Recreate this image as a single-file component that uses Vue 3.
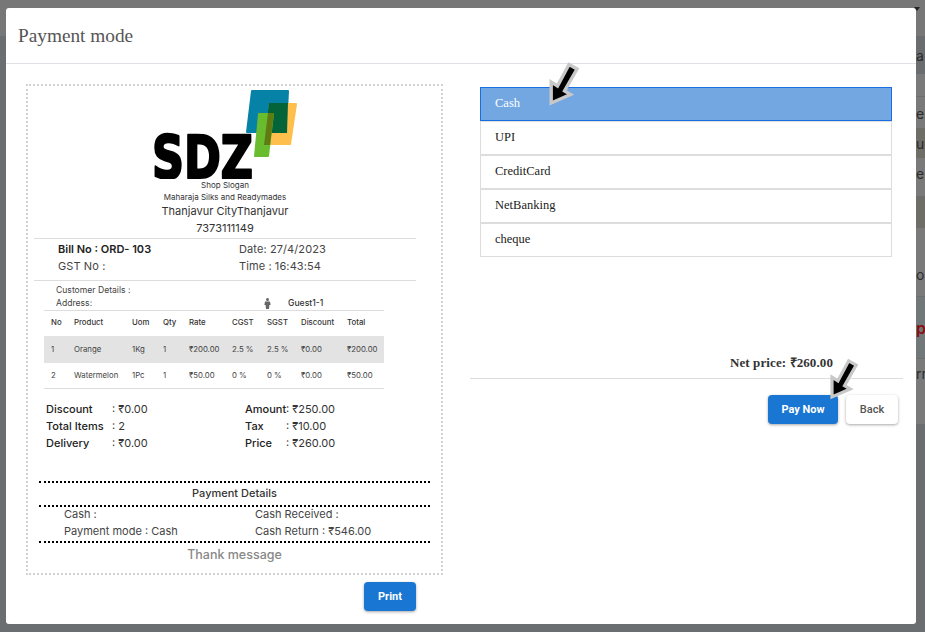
<template>
  <div class="page">
    <div class="backdrop">
      <div class="bg-top"></div>
      <div class="bg-rows">
        <div
          v-for="(r, i) in bgRows"
          :key="i"
          class="bg-row"
          :class="r.cls"
          :style="{ height: r.h + 'px' }"
        >
          <span v-if="r.text">{{ r.text }}</span>
        </div>
      </div>
      <i class="bg-caret"></i>
    </div>

    <div class="modal">
      <header class="modal-head">Payment mode</header>
      <div class="modal-body">
        <section class="left">
          <div class="receipt">
            <div class="logo">
              <svg width="150" height="91" viewBox="0 0 150 91">
                <path d="M102 3h36l-2 41H97z" fill="#0682a6" stroke="#0682a6" stroke-width="2" stroke-linejoin="round" />
                <path d="M120 16h26l-6 40h-25z" fill="#ffbf4d" stroke="#ffbf4d" stroke-width="2" stroke-linejoin="round" />
                <path d="M119 15h19l-1 30h-22z" fill="#03643a" />
                <path d="M109 26h14l-5 42h-13z" fill="#6abc2f" stroke="#6abc2f" stroke-width="2" stroke-linejoin="round" />
                <path d="M118 25h6l-4 32h-6z" fill="#5f7b12" />
                <text class="logo-text" x="2" y="90" textLength="101" lengthAdjust="spacingAndGlyphs">SDZ</text>
              </svg>
            </div>
            <div class="center tiny">Shop Slogan</div>
            <div class="center tiny">Maharaja Silks and Readymades</div>
            <div class="center addr">Thanjavur CityThanjavur</div>
            <div class="center addr last">7373111149</div>
            <hr class="rule" />
            <div class="bill">
              <div><b>Bill No : ORD- 103</b></div>
              <div>Date: 27/4/2023</div>
              <div>GST No :</div>
              <div>Time : 16:43:54</div>
            </div>
            <hr class="rule" />
            <div class="customer">
              <div>Customer Details :</div>
              <div class="cust-row">
                <span>Address:</span>
                <span class="guest">
                  <svg width="7" height="11" viewBox="0 0 7 11"><circle cx="3.5" cy="1.6" r="1.5" fill="#666" /><path d="M1 3.4h5l.6 3.6H5.4L5 11H2l-.4-4H.4z" fill="#666" /></svg>
                  <b>Guest1-1</b>
                </span>
              </div>
            </div>
            <table class="items">
              <colgroup>
                <col v-for="(w, i) in colWidths" :key="i" :width="w" />
              </colgroup>
              <thead>
                <tr><th v-for="h in heads" :key="h">{{ h }}</th></tr>
              </thead>
              <tbody>
                <tr v-for="row in rows" :key="row[0]">
                  <td v-for="(c, i) in row" :key="i">{{ c }}</td>
                </tr>
              </tbody>
            </table>
            <div class="totals">
              <div class="tot"><b>Discount</b><span>: ₹0.00</span></div>
              <div class="tot r"><b>Amount</b><span>: ₹250.00</span></div>
              <div class="tot"><b>Total Items</b><span>: 2</span></div>
              <div class="tot r"><b>Tax</b><span>: ₹10.00</span></div>
              <div class="tot"><b>Delivery</b><span>: ₹0.00</span></div>
              <div class="tot r"><b>Price</b><span>: ₹260.00</span></div>
            </div>
            <div class="pay-title">Payment Details</div>
            <div class="pay-info">
              <div>Cash :</div>
              <div>Cash Received :</div>
              <div>Payment mode : Cash</div>
              <div>Cash Return : ₹546.00</div>
            </div>
            <div class="thanks">Thank message</div>
          </div>
          <div class="print-row">
            <button class="btn primary print">Print</button>
          </div>
        </section>

        <section class="right">
          <ul class="modes">
            <li v-for="m in modes" :key="m" :class="{ active: m === selected }">{{ m }}</li>
            <svg class="arrow a1" width="32" height="47" viewBox="0 0 32 47"><path :d="arrowPath" fill="#000" stroke="#c8c8c8" stroke-width="3.4" /></svg>
          </ul>
          <div class="net">Net price: ₹260.00</div>
          <hr class="net-rule" />
          <div class="actions">
            <button class="btn primary pay">Pay Now</button>
            <button class="btn back">Back</button>
            <svg class="arrow a2" width="30" height="45" viewBox="0 0 32 47"><path :d="arrowPath" fill="#000" stroke="#c8c8c8" stroke-width="3.4" /></svg>
          </div>
        </section>
      </div>
    </div>
  </div>
</template>

<script setup>
import { ref } from 'vue'

const heads = ['No', 'Product', 'Uom', 'Qty', 'Rate', 'CGST', 'SGST', 'Discount', 'Total']
const colWidths = [23, 58, 31, 26, 43, 35, 34, 46, 44]
const rows = [
  ['1', 'Orange', '1Kg', '1', '₹200.00', '2.5 %', '2.5 %', '₹0.00', '₹200.00'],
  ['2', 'Watermelon', '1Pc', '1', '₹50.00', '0 %', '0 %', '₹0.00', '₹50.00']
]
const modes = ['Cash', 'UPI', 'CreditCard', 'NetBanking', 'cheque']
const selected = ref('Cash')
const arrowPath = 'M3.2 41 L3.2 20 L9.5 24 L21 2.5 L29 7 L16.5 29 L22.5 32.5 Z'

// what shows of the page behind the dialog, top to bottom
const bgRows = [
  { h: 38, cls: 'band', text: 'a' },
  { h: 23, cls: 'line' },
  { h: 31, text: 'er' },
  { h: 30, cls: 'brown', text: 'un' },
  { h: 30, text: 'er' },
  { h: 9, cls: 'line' },
  { h: 31, cls: 'brown' },
  { h: 24 },
  { h: 45, cls: 'line', text: 'ou' },
  { h: 62, cls: 'blue line', text: 'p' },
  { h: 28, text: 'rn' },
  { h: 37 }
]
</script>

<style>
html, body { margin: 0; overflow: hidden; background: #6c7174; }
</style>

<style scoped>
.page {
  position: relative;
  width: 925px;
  height: 632px;
  box-sizing: border-box;
  padding: 8px 9px 8px 6px;
  overflow: hidden;
  font-family: Inter, sans-serif;
  color: #212529;
}
.backdrop { position: absolute; inset: 0; background: #6a6e71; }
.bg-top { height: 36px; background: #777; }
.bg-rows { margin-left: 100px; }
.bg-row {
  position: relative;
  box-sizing: border-box;
  background: #7a7a7a;
  font-size: 14px;
  color: #2c2c2c;
}
.bg-row.band { background: #696d70; }
.bg-row.brown { background: #6e6d67; }
.bg-row.blue { background: #72777a; }
.bg-row.line { border-bottom: 1px solid #6c6e70; }
.bg-row span { position: absolute; left: 816px; top: 50%; transform: translateY(-50%); white-space: nowrap; }
.bg-row.blue span { color: #8a0f0f; font-size: 16px; font-weight: 600; }
.bg-caret {
  position: absolute;
  left: 914px;
  top: 7px;
  border: 3px solid transparent;
  border-top: 4px solid #222;
  border-bottom: 0;
}

.modal {
  position: relative;
  width: 910px;
  height: 616px;
  background: #fff;
  border-radius: 3px;
  overflow: hidden;
  display: flex;
  flex-direction: column;
}
.modal-head {
  height: 56px;
  box-sizing: border-box;
  flex: none;
  padding: 17px 12px 0;
  border-bottom: 1px solid #dee2e6;
  font-family: "Liberation Serif", serif;
  font-size: 19.3px;
  line-height: 22px;
  color: #555;
}
.modal-body { display: flex; flex: 1; }

.left { width: 437px; flex: none; padding: 20px 0 0 20px; box-sizing: border-box; }
.receipt {
  width: 417px;
  height: 491px;
  box-sizing: border-box;
  border: 2px dotted #d2d2d2;
  padding-left: 5px;
  overflow: hidden;
}
.logo { height: 91px; padding-left: 117px; margin-top: 2px; line-height: 0; }
.logo-text {
  font-family: "DejaVu Sans", sans-serif;
  font-weight: 700;
  font-size: 58px;
  fill: #000;
  stroke: #000;
  stroke-width: 2.4;
  stroke-linejoin: round;
}
.center { text-align: center; width: 378px; margin-left: 3px; }
.tiny { font-size: 8px; line-height: 12px; color: #333; }
.addr { font-size: 11px; line-height: 17px; color: #333; }
.addr.last { margin-bottom: 1px; }
.rule { width: 382px; margin: 0 0 0 1px; border: 0; border-top: 1px solid #ddd; }
.bill {
  display: grid;
  grid-template-columns: 181px 1fr;
  padding: 2px 0 5px 25px;
  font-size: 11px;
  line-height: 17px;
  letter-spacing: .1px;
  color: #444;
}
.bill b { font-weight: 600; color: #222; letter-spacing: 0; }
.customer { font-size: 8.6px; line-height: 13px; padding: 3px 0 0 23px; color: #444; }
.cust-row { display: flex; }
.cust-row > span:first-child { width: 208px; }
.guest { display: inline-flex; align-items: center; gap: 17px; }
.guest b { font-weight: 500; color: #333; }
.items {
  width: 340px;
  margin-left: 11px;
  border-collapse: collapse;
  table-layout: fixed;
  font-size: 7.8px;
  color: #444;
  border-top: 1px solid #ddd;
  border-bottom: 1px solid #ddd;
}
.items th { font-weight: 500; text-align: left; height: 25px; padding: 0 0 2px 7px; box-sizing: border-box; color: #333; }
.items td { padding: 0 0 0 7px; white-space: nowrap; }
.items tbody tr:first-child { background: #e3e3e3; }
.items tbody tr:first-child td { height: 27px; }
.items tbody tr:last-child td { height: 25px; }
.totals {
  display: grid;
  grid-template-columns: 199px 1fr;
  padding: 12px 0 0 13px;
  font-size: 11px;
  line-height: 17px;
  color: #333;
}
.tot { display: flex; }
.tot b { font-weight: 500; width: 66px; color: #222; }
.tot.r b { width: 41px; }
.pay-title {
  width: 391px;
  margin: 29px 0 0 6px;
  height: 26px;
  box-sizing: border-box;
  border-top: 2px dotted #000;
  border-bottom: 2px dotted #000;
  text-align: center;
  font-size: 11px;
  font-weight: 500;
  line-height: 21px;
  color: #333;
}
.pay-info {
  width: 391px;
  margin: -1px 0 0 6px;
  box-sizing: border-box;
  display: grid;
  grid-template-columns: 191px 1fr;
  padding: 0 0 1px 25px;
  border-bottom: 2px dotted #000;
  font-size: 11px;
  line-height: 17px;
  color: #444;
}
.thanks { width: 391px; margin-left: 6px; text-align: center; font-size: 12.5px; font-weight: 500; line-height: 24px; color: #888; }
.print-row { width: 390px; display: flex; justify-content: flex-end; margin-top: 7px; }

.btn {
  border: 0;
  border-radius: 4px;
  height: 29px;
  font-family: Roboto, sans-serif;
  font-size: 11px;
  font-weight: 700;
  padding: 0;
  box-shadow: 0 1px 3px rgba(0, 0, 0, .35);
}
.primary { background: #1976d2; color: #fff; }
.print { width: 52px; }
.pay { width: 70px; }
.back { width: 52px; background: #fff; color: #555; font-weight: 500; }

.right { flex: 1; padding: 23px 13px 0 27px; position: relative; min-width: 0; }
.modes { list-style: none; margin: 0 0 0 10px; padding: 0; width: 412px; position: relative; }
.modes li {
  height: 34px;
  box-sizing: border-box;
  border: 1px solid #ddd;
  padding: 0 14px;
  font-family: "Liberation Serif", serif;
  font-size: 12.5px;
  line-height: 31px;
  color: #222;
}
.modes li.active { background: #72a7e2; border-color: #1a6fe0; color: #fff; }
.arrow { position: absolute; }
.a1 { left: 68px; top: -25px; }
.net {
  margin-top: 98px;
  padding-right: 70px;
  text-align: right;
  font-family: "Liberation Serif", serif;
  font-weight: 700;
  font-size: 13px;
  letter-spacing: .1px;
  line-height: 15px;
  color: #333;
}
.net-rule { margin: 8px 0 0 0; border: 0; border-top: 1px solid #ddd; }
.actions { display: flex; justify-content: flex-end; gap: 8px; margin: 16px 5px 0 0; position: relative; }
.a2 { right: 39px; top: -37px; }
</style>
